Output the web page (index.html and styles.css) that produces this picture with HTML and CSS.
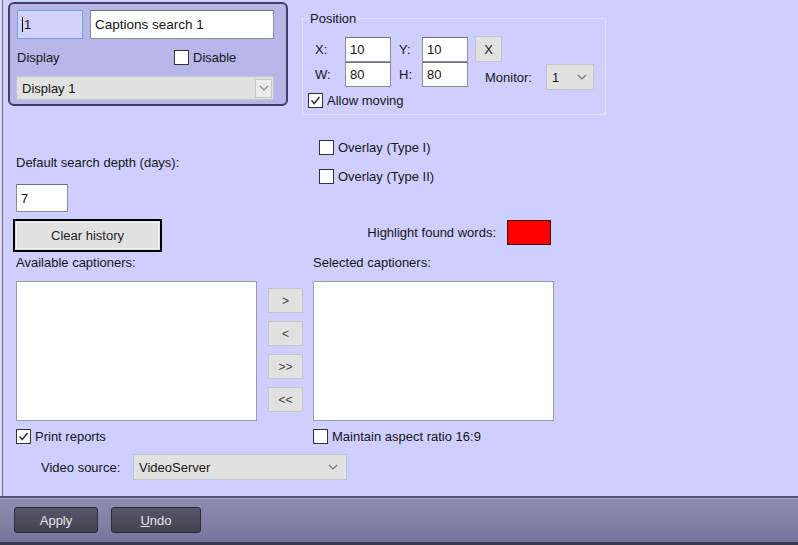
FILE: index.html
```html
<!DOCTYPE html>
<html lang="en">
<head>
  <meta charset="UTF-8" />
  <title>Captions search</title>
  <link rel="stylesheet" href="styles.css">
</head>
<body>
  <div class="app">
    <div class="main">
      <div class="top">
        <div class="ident">
          <div class="ident-row">
            <div class="field field-id"><span class="caret"></span>1</div>
            <div class="field field-name">Captions search 1</div>
          </div>
          <div class="display-row">
            <span class="display-label">Display</span>
            <label class="check"><span class="box"></span>Disable</label>
          </div>
          <div class="combo combo-display">
            <span>Display 1</span>
            <span class="combo-btn">
              <svg width="10" height="6" viewBox="0 0 10 6"><polyline points="1,1 5,5 9,1" fill="none" stroke="#8a8a8a" stroke-width="1.2"/></svg>
            </span>
          </div>
        </div>

        <div class="position">
          <div class="legend">Position</div>
          <div class="pos-row">
            <span class="pos-label">X:</span>
            <div class="field field-num">10</div>
            <span class="pos-label pos-label-2">Y:</span>
            <div class="field field-num">10</div>
            <div class="btn btn-x">X</div>
          </div>
          <div class="pos-row pos-row-2">
            <span class="pos-label">W:</span>
            <div class="field field-num">80</div>
            <span class="pos-label pos-label-2">H:</span>
            <div class="field field-num">80</div>
            <span class="monitor-label">Monitor:</span>
            <div class="combo combo-monitor">
              <span>1</span>
              <svg width="10" height="6" viewBox="0 0 10 6"><polyline points="1,1 5,5 9,1" fill="none" stroke="#777" stroke-width="1.2"/></svg>
            </div>
          </div>
          <label class="check check-moving"><span class="box checked"><svg width="11" height="11" viewBox="0 0 11 11"><polyline points="1.5,5.5 4.2,8.5 9.5,2" fill="none" stroke="#333" stroke-width="1.5"/></svg></span>Allow moving</label>
        </div>
      </div>

      <div class="middle">
        <div class="mid-left">
          <div class="depth-label">Default search depth (days):</div>
          <div class="field field-depth">7</div>
          <div class="btn btn-clear"><span>Clear history</span></div>
        </div>
        <div class="mid-right">
          <label class="check check-overlay"><span class="box"></span>Overlay (Type I)</label>
          <label class="check check-overlay check-overlay-2"><span class="box"></span>Overlay (Type II)</label>
          <div class="highlight">
            <span>Highlight found words:</span>
            <span class="swatch"></span>
          </div>
        </div>
      </div>

      <div class="list-labels">
        <span class="list-label">Available captioners:</span>
        <span>Selected captioners:</span>
      </div>

      <div class="lists">
        <div class="listbox"></div>
        <div class="movers">
          <div class="btn btn-move">&gt;</div>
          <div class="btn btn-move">&lt;</div>
          <div class="btn btn-move">&gt;&gt;</div>
          <div class="btn btn-move">&lt;&lt;</div>
        </div>
        <div class="listbox listbox-right"></div>
      </div>

      <div class="options">
        <label class="check check-print"><span class="box checked"><svg width="11" height="11" viewBox="0 0 11 11"><polyline points="1.5,5.5 4.2,8.5 9.5,2" fill="none" stroke="#333" stroke-width="1.5"/></svg></span>Print reports</label>
        <label class="check"><span class="box"></span>Maintain aspect ratio 16:9</label>
      </div>

      <div class="source">
        <span class="source-label">Video source:</span>
        <div class="combo combo-source">
          <span>VideoServer</span>
          <svg width="10" height="6" viewBox="0 0 10 6"><polyline points="1,1 5,5 9,1" fill="none" stroke="#777" stroke-width="1.2"/></svg>
        </div>
      </div>
    </div>

    <div class="footer">
      <div class="dark-btn btn-apply">Apply</div>
      <div class="dark-btn btn-undo"><u>U</u>ndo</div>
    </div>
  </div>
</body>
</html>
```

FILE: styles.css
```css
* {
  box-sizing: border-box;
}

body {
  margin: 0;
  background-color: #dcdcf0;
  font-family: "Liberation Sans", Arial, sans-serif;
  font-size: 13px;
  color: #161616;
}

.app {
  width: 798px;
  height: 545px;
  display: flex;
  flex-direction: column;
}

.main {
  height: 496px;
  margin-left: 2px;
  border-left: 1px solid #6c6c84;
  background-color: #cfcfff;
}

/* top part */
.top {
  display: flex;
  align-items: flex-start;
}

.ident {
  width: 280px;
  height: 104px;
  margin: 2px 0 0 5px;
  border: 2px solid #3d3d66;
  border-radius: 6px;
  background-color: #b6b6e8;
}

.ident-row {
  display: flex;
  margin: 6px 0 0 7px;
}

.field {
  display: flex;
  align-items: center;
  height: 25px;
  padding-left: 4px;
  background-color: #fff;
  border: 1px solid #8c8c9c;
  border-top-color: #6e6e7e;
  white-space: nowrap;
}

.field-id {
  width: 66px;
  height: 29px;
  background-color: #d2d2fa;
  border: 1px solid #6fa6dc;
}

.caret {
  width: 1px;
  height: 15px;
  margin-right: 1px;
  background-color: #000;
}

.field-name {
  width: 184px;
  height: 29px;
  margin-left: 7px;
  font-size: 13.5px;
}

.display-row {
  display: flex;
  align-items: center;
  height: 15px;
  margin: 11px 0 0 7px;
}

.display-label {
  width: 157px;
}

.check {
  display: flex;
  align-items: center;
  white-space: nowrap;
}

.box {
  display: flex;
  align-items: center;
  justify-content: center;
  width: 15px;
  height: 15px;
  margin-right: 4px;
  background-color: #fff;
  border: 1px solid #333;
}

.combo {
  display: flex;
  align-items: center;
  justify-content: space-between;
  background-color: #e1e1e1;
  border: 1px solid #c4c4cc;
  padding: 0 6px 0 5px;
}

.combo-display {
  width: 258px;
  height: 24px;
  margin: 11px 0 0 6px;
  padding-right: 1px;
}

.combo-btn {
  display: flex;
  align-items: center;
  justify-content: center;
  width: 17px;
  height: 19px;
  border: 1px solid #c8c8c8;
  background-color: #ececec;
}

.position {
  width: 304px;
  height: 97px;
  margin: 18px 0 0 14px;
  border: 1px solid #e2e2ff;
}

.legend {
  width: fit-content;
  margin: -8px 0 0 6px;
  padding: 0 1px;
  line-height: 15px;
  background-color: #cfcfff;
}

.pos-row {
  display: flex;
  align-items: center;
  margin: 10px 0 0 12px;
}

.pos-row-2 {
  align-items: flex-start;
  margin-top: 0;
}

.pos-label {
  width: 30px;
  line-height: 25px;
}

.pos-label-2 {
  width: 23px;
  margin-left: 8px;
}

.field-num {
  width: 46px;
}

.btn {
  display: flex;
  align-items: center;
  justify-content: center;
  background-color: #e1e1e1;
  border: 1px solid #c6c6c6;
  color: #222;
}

.btn-x {
  width: 27px;
  height: 26px;
  margin-left: 7px;
}

.monitor-label {
  width: 61px;
  margin: 3px 0 0 17px;
  line-height: 25px;
}

.combo-monitor {
  width: 48px;
  height: 26px;
  margin-top: 2px;
}

.check-moving {
  margin: 3px 0 0 5px;
}

/* middle part */
.middle {
  display: flex;
}

.mid-left {
  width: 310px;
  padding-left: 13px;
}

.depth-label {
  margin-top: 40px;
  line-height: 16px;
}

.field-depth {
  width: 52px;
  height: 28px;
  margin-top: 13px;
}

.btn-clear {
  width: 149px;
  height: 33px;
  margin: 7px 0 0 -3px;
  border: 2px solid #000;
  padding: 1px;
}

.btn-clear span {
  display: flex;
  align-items: center;
  justify-content: center;
  width: 100%;
  height: 100%;
  border: 1px solid #f2f2f2;
  background-color: #e1e1e1;
}

.check-overlay {
  margin: 25px 0 0 6px;
}

.check-overlay-2 {
  margin-top: 14px;
}

.highlight {
  display: flex;
  align-items: center;
  justify-content: flex-end;
  gap: 11px;
  width: 238px;
  margin-top: 36px;
}

.swatch {
  width: 44px;
  height: 25px;
  background-color: #ff0000;
  border: 1px solid #3a1010;
}

/* lists */
.list-labels {
  display: flex;
  margin-top: 3px;
  padding-left: 13px;
  line-height: 16px;
}

.list-label {
  width: 297px;
}

.lists {
  display: flex;
  margin-top: 10px;
  padding-left: 13px;
}

.listbox {
  width: 241px;
  height: 140px;
  background-color: #fff;
  border: 1px solid #9a9aae;
}

.movers {
  display: flex;
  flex-direction: column;
  gap: 8px;
  margin-left: 11px;
  padding-top: 7px;
}

.btn-move {
  width: 35px;
  height: 25px;
  font-size: 12px;
  color: #444;
}

.listbox-right {
  margin-left: 10px;
}

.options {
  display: flex;
  margin-top: 8px;
  padding-left: 13px;
}

.check-print {
  width: 297px;
}

.source {
  display: flex;
  align-items: center;
  margin-top: 10px;
  padding-left: 38px;
}

.source-label {
  width: 92px;
}

.combo-source {
  width: 214px;
  height: 26px;
  padding-right: 8px;
}

/* bottom bar */
.footer {
  flex: 1;
  display: flex;
  gap: 13px;
  padding: 9px 0 0 14px;
  border-top: 2px solid #55537a;
  border-bottom: 3px solid #3b3a50;
  box-shadow: inset 0 1px 0 #a9a7c2;
  background: linear-gradient(#8e8caf, #77759d);
}

.dark-btn {
  display: flex;
  align-items: center;
  justify-content: center;
  height: 26px;
  background: linear-gradient(#56546a, #45434f);
  border: 1px solid #2c2b38;
  border-radius: 3px;
  color: #e6e6ee;
}

.btn-apply {
  width: 84px;
}

.btn-undo {
  width: 90px;
}
```
